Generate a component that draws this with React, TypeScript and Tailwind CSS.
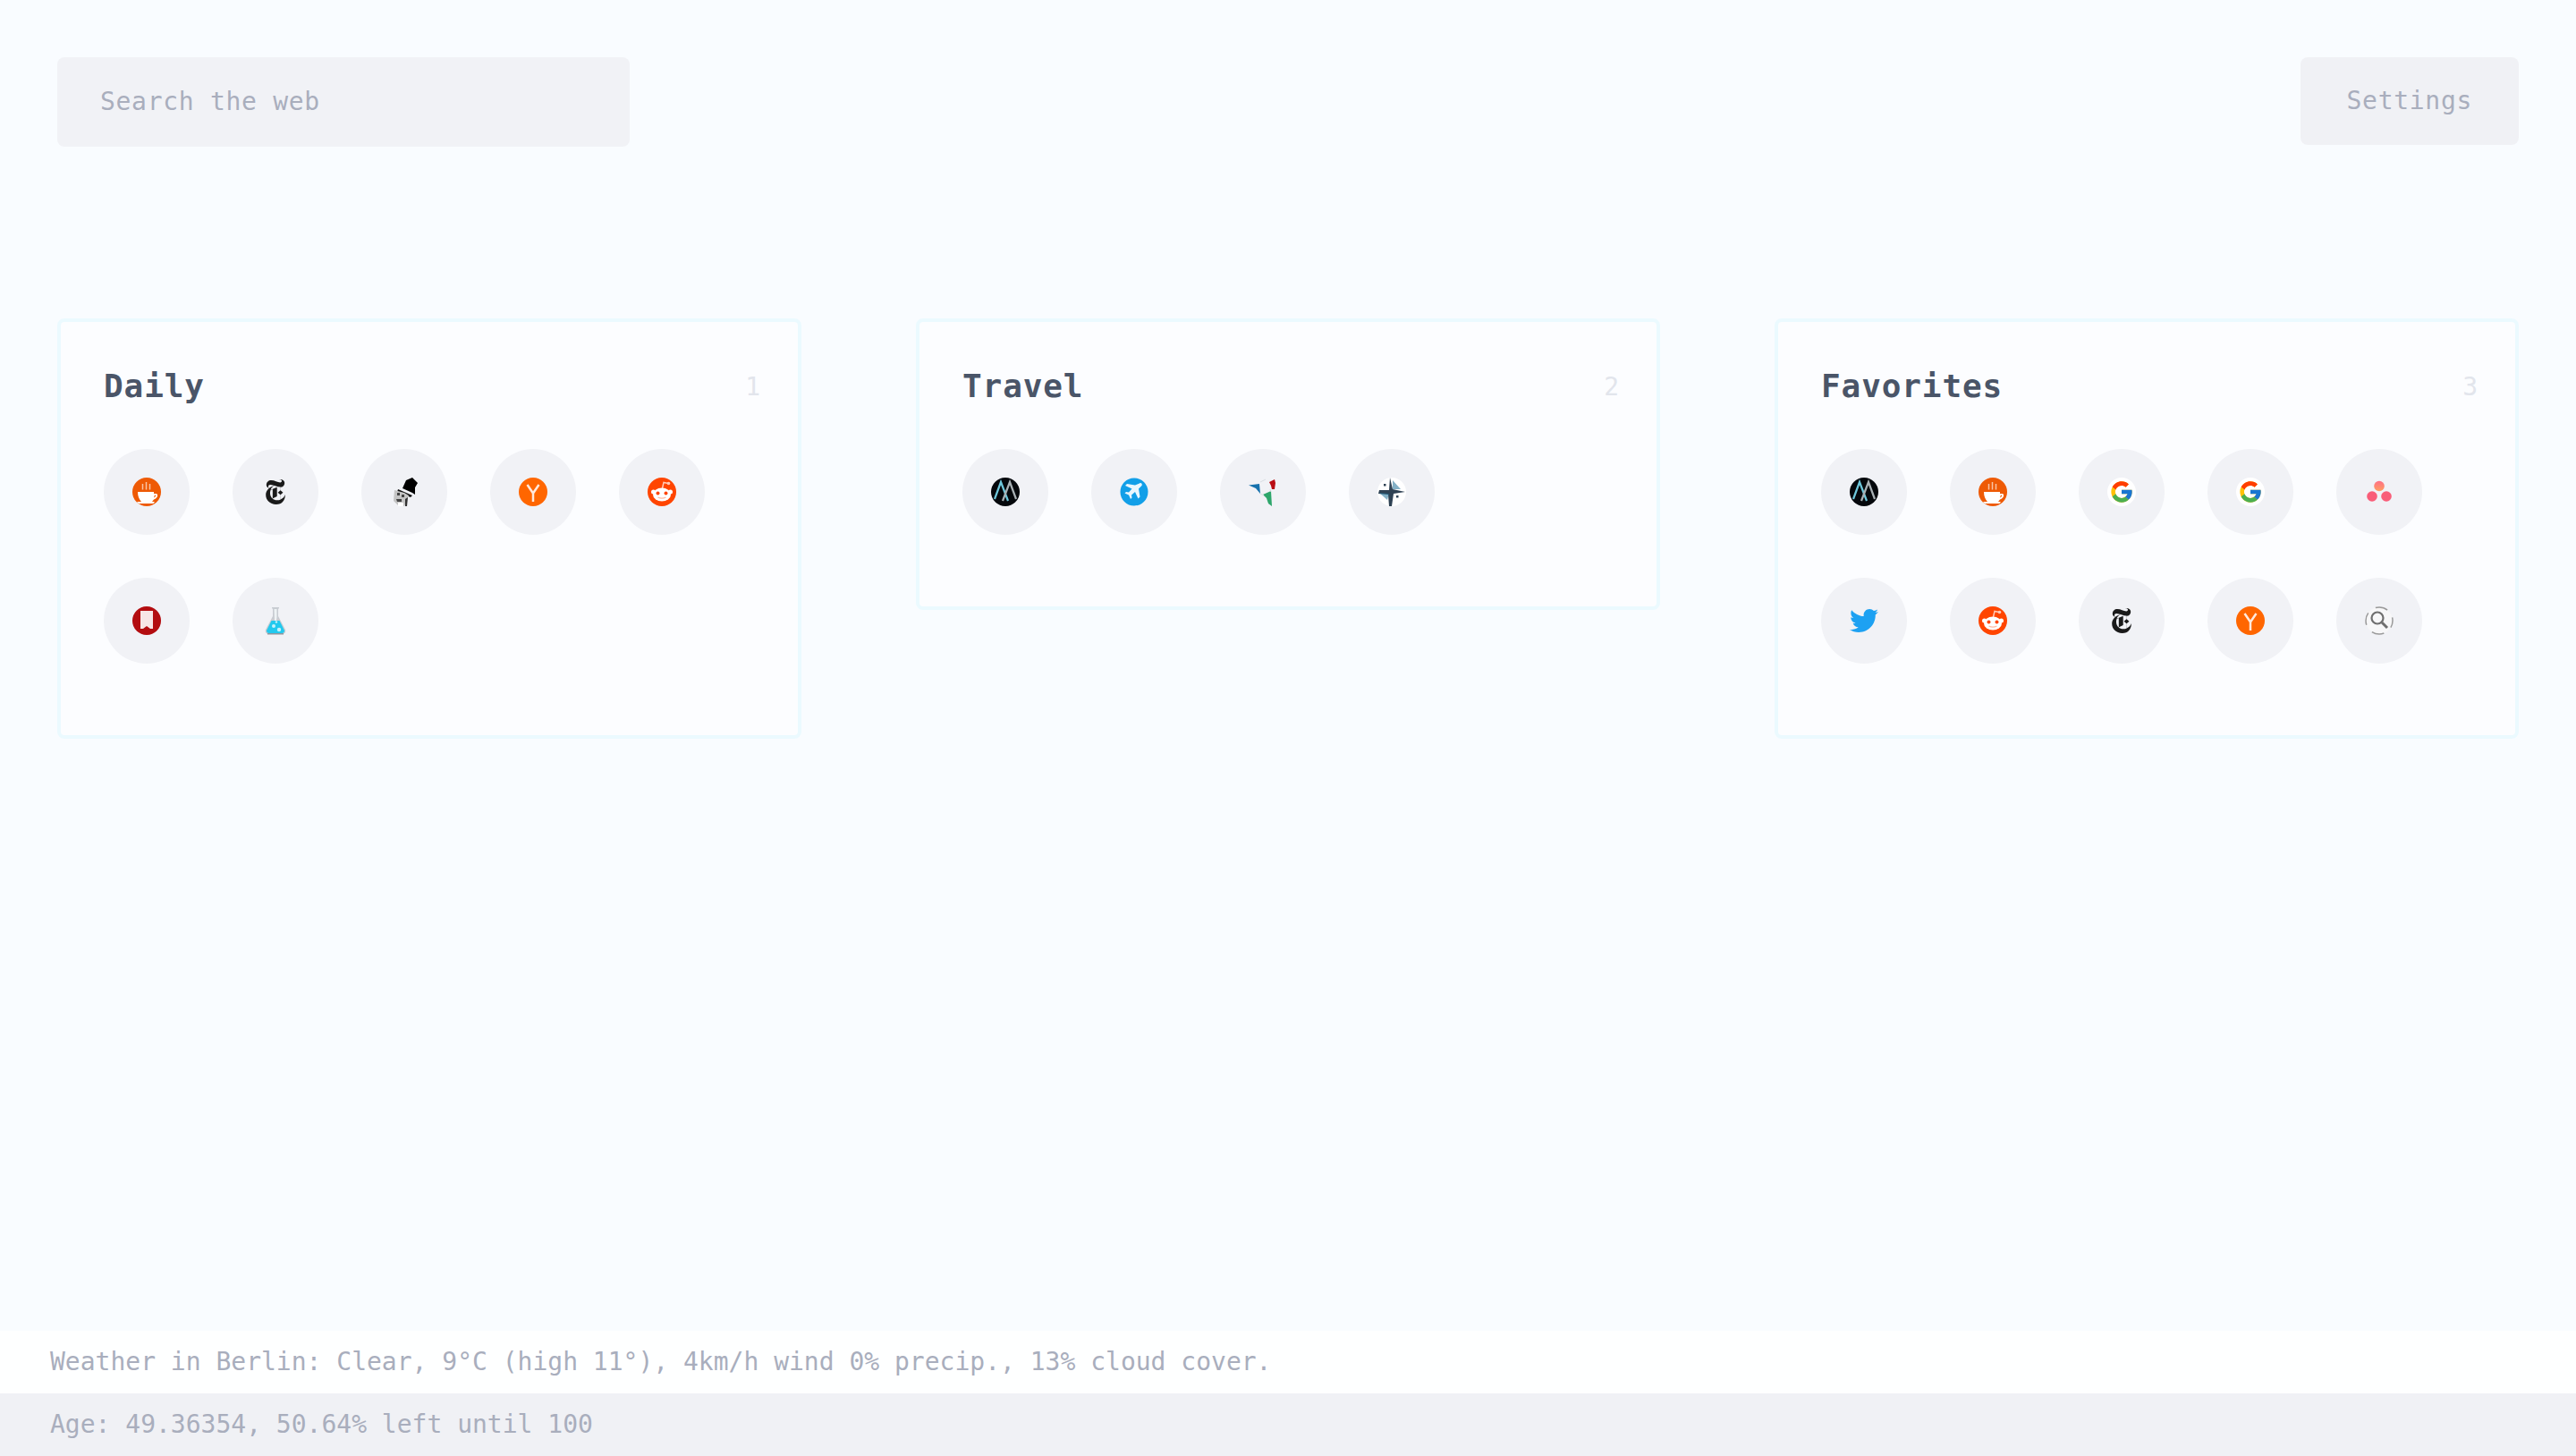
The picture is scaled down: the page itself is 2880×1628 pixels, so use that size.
import type { ReactNode } from 'react';
import { SiNewyorktimes } from 'react-icons/si';
import { FcGoogle } from 'react-icons/fc';
import { FaTwitter } from 'react-icons/fa';

const Coffee = () => (
  <svg viewBox="0 0 32 32" className="h-8 w-8">
    <circle cx="16" cy="16" r="16" fill="#ee5a05" />
    <path d="M11.500 7v6.500M15.500 5v8.500M19.500 7v6.500" stroke="#f9c4a4" strokeWidth="1.500" />
    <path d="M6 16h18v2h2.500c2.500 0 2.500 5-2.500 6.500l-2 2.500H10C7.500 24 6 21 6 16z" fill="#fff" />
    <path d="M25 19.500c1.500 0 1.500 2-1 3z" fill="#ee5a05" />
    <path d="M5 27h20l-1.500 2H7z" fill="#fff" />
  </svg>
);

const Nyt = () => <SiNewyorktimes className="h-7 w-7 text-[#1a1a1a]" />;

const TopHat = () => (
  <svg viewBox="0 0 32 32" className="h-8 w-8">
    <path d="M14 12 18 3l7-3 6 6-3 5 0 8-3-2z" fill="#000" />
    <path d="M9 13l16 7-2 2L8 16z" fill="#111" />
    <path d="M5 14l11 3 5 3-3 8-2 4h-6L4 26z" fill="#c4c4c4" />
    <path d="M8 17h3v3H8zM13 19h3v3h-3zM7 24l6 0 0 3-5 0z" fill="#444" />
    <path d="M9 28h6v4H9z" fill="#fff" />
    <path d="M17 24l3-2-1 10h-2z" fill="#333" />
  </svg>
);

const Yc = () => (
  <svg viewBox="0 0 32 32" className="h-8 w-8">
    <circle cx="16" cy="16" r="16" fill="#ff6600" />
    <path d="M9.500 8 16 17.500 22.500 8M16 17v10" fill="none" stroke="#ffe9dc" strokeWidth="2.500" />
  </svg>
);

const Reddit = () => (
  <svg viewBox="0 0 32 32" className="h-8 w-8">
    <circle cx="16" cy="16" r="16" fill="#ff4500" />
    <path d="M16.500 12l1.500-6.500 5 1" fill="none" stroke="#ffc9b5" strokeWidth="1.500" />
    <circle cx="23.500" cy="6.500" r="1.800" fill="#ffc9b5" />
    <circle cx="6.500" cy="16" r="2.500" fill="#fff" />
    <circle cx="25.500" cy="16" r="2.500" fill="#fff" />
    <ellipse cx="16" cy="19" rx="10" ry="7.500" fill="#fff" />
    <circle cx="11.500" cy="17.500" r="2" fill="#ff4500" />
    <circle cx="20.500" cy="17.500" r="2" fill="#ff4500" />
    <path d="M11.500 22c3 1.500 6 1.500 9 0" fill="none" stroke="#ffb9a0" strokeWidth="1.200" />
  </svg>
);

const Bookmark = () => (
  <svg viewBox="0 0 32 32" className="h-8 w-8">
    <circle cx="16" cy="16" r="16" fill="#b30d10" />
    <path d="M9 5h14v20l-3 0-4-3-4 3H9z" fill="#f7e6e6" />
  </svg>
);

const Flask = () => (
  <svg viewBox="0 0 32 32" className="h-8 w-8">
    <path d="M12 1h8v1.500h-1V11l8 15c1 3-1 5-4 5H9c-3 0-5-2-4-5l8-15V2.500h-1z" fill="#c8ccd2" />
    <path d="M14.500 3h3v9l-.5 4h-2z" fill="#eef3f5" />
    <path d="M11.500 16h9L26 27c0 2-1 3-3 3H9c-2 0-3-1-3-3z" fill="#22c9ee" />
    <circle cx="14" cy="22" r="2" fill="#c6f2fb" />
    <circle cx="20" cy="26" r="2.200" fill="#c6f2fb" />
    <circle cx="17" cy="17.500" r="1.200" fill="#c6f2fb" />
    <path d="M7 30h18v1.500H7z" fill="#8f979e" />
  </svg>
);

const Mountains = () => (
  <svg viewBox="0 0 32 32" className="h-8 w-8">
    <circle cx="16" cy="16" r="16" fill="#05080c" />
    <path d="M4 24 11 5l8 21" fill="none" stroke="#6fc8dc" strokeWidth="2.200" />
    <path d="M13 26 21 5l7 19" fill="none" stroke="#a9b1b5" strokeWidth="2.200" />
  </svg>
);

const PlaneBlue = () => (
  <svg viewBox="0 0 32 32" className="h-8 w-8">
    <circle cx="16" cy="16" r="15.500" fill="#129fe8" />
    <path d="M22 6.500c1.500-1.300 3.500.5 2.500 2.500L21 12.500l1.500 9-2 2-3.500-7.500-4 3.500.5 3-1.500 1.500-2-4.500-4.500-2L7 16l3 .5 3.500-4L6 9l2-2 9 1.500z" fill="#eaf7fe" />
  </svg>
);

const TriArrows = () => (
  <svg viewBox="0 0 32 32" className="h-8 w-8">
    <path d="M0 8.500 12 7l1 11-5-6z" fill="#1671ad" />
    <path d="M23 5l6-3 1 4-1 7h-3l-1-4z" fill="#b90d14" />
    <path d="M16 19l9-4 1 17-4-3-2-6z" fill="#2ea66b" />
    <path d="M13 5l6-3M13 18l4 2M24 13l1 3" stroke="#d8dde2" strokeWidth="1" />
  </svg>
);

const Compass = () => (
  <svg viewBox="0 0 32 32" className="h-8 w-8">
    <circle cx="16" cy="16" r="16" fill="#fff" />
    <path d="M14 0l3 13 14 3-13 2-2 14h-3l-1-13-11-1 1-4 11 0z" fill="#2f4254" />
    <path d="M17 3l9 10-9 0zM2 17l11 1-2 7z" fill="#1d6f98" opacity=".55" />
    <path d="M7 7h2.500v2.500H7zM21 20h2.500v2.500H21z" fill="#2f4254" />
  </svg>
);

const Google = () => (
  <span className="flex h-8 w-8 items-center justify-center rounded-full bg-white">
    <FcGoogle className="h-7 w-7" />
  </span>
);

const Asana = () => (
  <svg viewBox="0 0 32 32" className="h-8 w-8">
    <defs>
      <linearGradient id="asana" x1="0" y1="0" x2="0" y2="1">
        <stop offset="0" stopColor="#ff6f86" />
        <stop offset="1" stopColor="#ffa060" />
      </linearGradient>
    </defs>
    <circle cx="16" cy="9.500" r="5.800" fill="url(#asana)" />
    <circle cx="8" cy="21" r="5.800" fill="#f95d78" />
    <circle cx="24" cy="21" r="5.800" fill="#f95d78" />
  </svg>
);

const Twitter = () => <FaTwitter className="h-8 w-8 text-[#1da1f2]" />;

const SearchGlyph = () => (
  <svg viewBox="0 0 32 32" className="h-8 w-8">
    <circle cx="16" cy="16" r="15" fill="#f7f7f8" stroke="#9a9a9a" strokeWidth="1.500" strokeDasharray="14 10" strokeDashoffset="6" />
    <circle cx="14" cy="13" r="6.500" fill="none" stroke="#6f6f6f" strokeWidth="2.200" />
    <path d="M19 18l6 6" stroke="#6f6f6f" strokeWidth="3" />
  </svg>
);

const sections: { title: string; icons: ReactNode[] }[] = [
  {
    title: 'Daily',
    icons: [<Coffee />, <Nyt />, <TopHat />, <Yc />, <Reddit />, <Bookmark />, <Flask />],
  },
  {
    title: 'Travel',
    icons: [<Mountains />, <PlaneBlue />, <TriArrows />, <Compass />],
  },
  {
    title: 'Favorites',
    icons: [
      <Mountains />,
      <Coffee />,
      <Google />,
      <Google />,
      <Asana />,
      <Twitter />,
      <Reddit />,
      <Nyt />,
      <Yc />,
      <SearchGlyph />,
    ],
  },
];

export default function App() {
  return (
    <div className="flex h-screen flex-col bg-[#f9fcff] font-['DejaVu_Sans_Mono',monospace] text-[28px] text-[#a9aebd]">
      <div className="flex items-start justify-between p-16">
        <input
          placeholder="Search the web"
          className="h-[100px] w-[640px] rounded-lg bg-[#f1f2f6] px-12 pb-[2px] tracking-wide outline-none placeholder:text-[#a9aebd]"
        />
        <button className="h-[98px] rounded-lg bg-[#f0f1f5] px-[52px] tracking-wide">Settings</button>
      </div>

      <div className="mt-32 grid grid-cols-3 items-start gap-32 px-16">
        {sections.map((section, i) => (
          <div key={section.title} className="rounded-lg border-4 border-[#ebfaff] bg-[#fcfdff] pb-20 pl-12 pr-[42px] pt-[50px]">
            <div className="flex h-[44px] items-center justify-between">
              <h2 className="text-4xl font-bold tracking-wide text-[#4a5568]">{section.title}</h2>
              <span className="pt-[2px] text-[#e2e5ec]">{i + 1}</span>
            </div>
            <div className="mt-12 flex flex-wrap gap-12">
              {section.icons.map((icon, j) => (
                <a key={j} className="flex h-24 w-24 items-center justify-center rounded-full bg-[#f1f2f6]">
                  <span className="blur-[0.5px]">{icon}</span>
                </a>
              ))}
            </div>
          </div>
        ))}
      </div>

      <div className="mt-auto">
        <div className="flex h-[70px] items-center bg-[#feffff] px-14">
          Weather in Berlin: Clear, 9°C (high 11°), 4km/h wind 0% precip., 13% cloud cover.
        </div>
        <div className="flex h-[70px] items-center bg-[#f0f1f5] px-14">Age: 49.36354, 50.64% left until 100</div>
      </div>
    </div>
  );
}
